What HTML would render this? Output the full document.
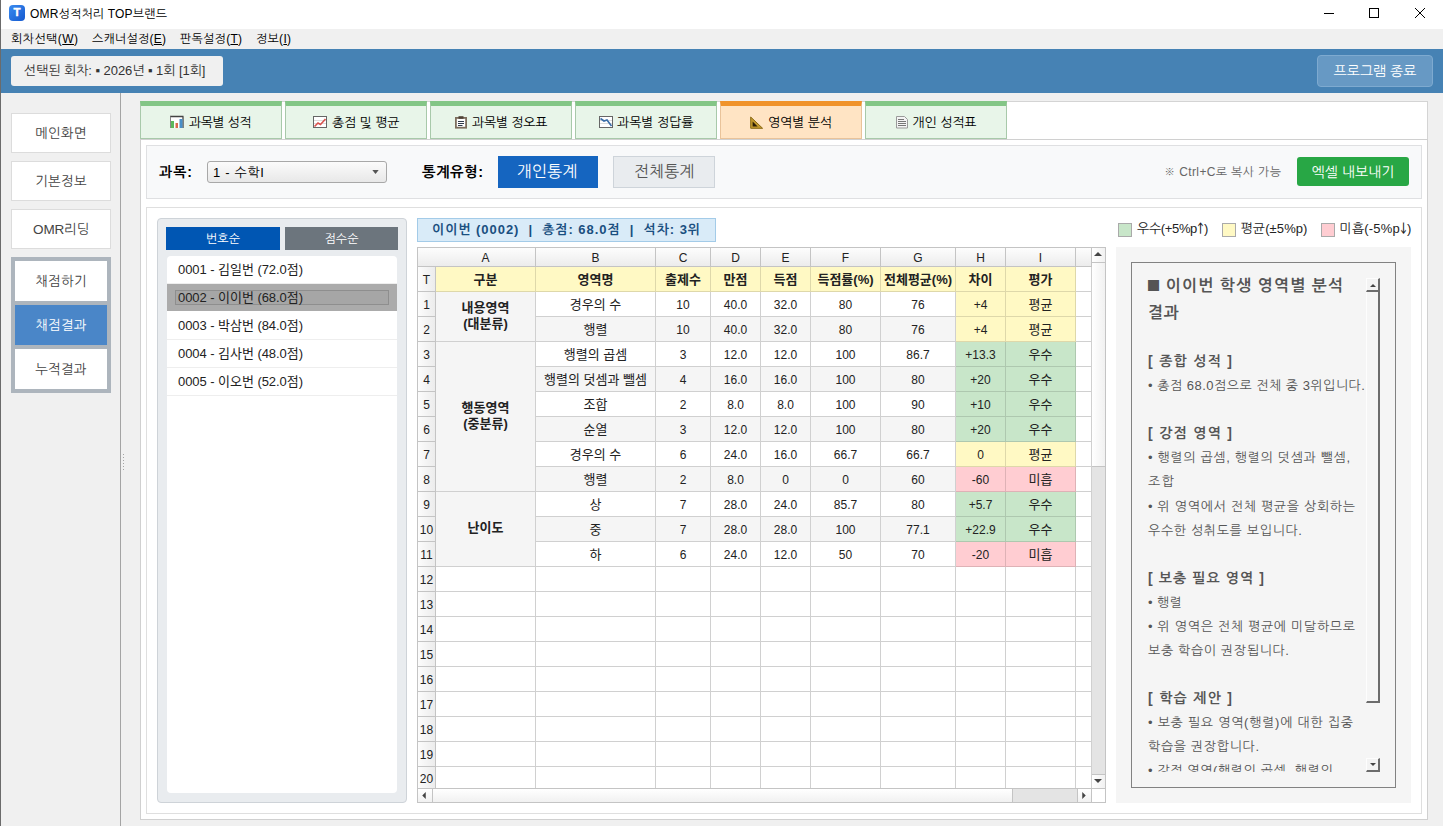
<!DOCTYPE html>
<html lang="ko"><head><meta charset="utf-8"><title>OMR성적처리 TOP브랜드</title>
<style>
html,body{margin:0;padding:0}
body{width:1443px;height:826px;position:relative;overflow:hidden;background:#f0f0f0;font-family:"Liberation Sans","NanumGothic",sans-serif;font-size:12px;color:#000}
.b{position:absolute;box-sizing:border-box}
.t{position:absolute;white-space:nowrap;box-sizing:border-box}
.ui{font-family:"Liberation Sans","NanumGothic",sans-serif}
.mg{font-family:"Liberation Sans","Noto Sans CJK KR",sans-serif}
.c{position:absolute;box-sizing:border-box;border-right:1px solid #d0d0d0;border-bottom:1px solid #d0d0d0;text-align:center;font-family:"Liberation Sans","Noto Sans CJK KR",sans-serif;font-size:12px;color:#222;white-space:nowrap;overflow:hidden}
.hd{background:linear-gradient(#fdfdfd,#ececec);border-color:#c4c4c4;color:#222}
.rh{background:linear-gradient(90deg,#fcfcfc,#ececec);border-color:#c4c4c4}
.y,.g,.p{border-color:rgba(0,0,0,.13)}
.y{background:#fff9c4}.g{background:#c8e6c9}.p{background:#ffcdd2}.z{background:#f5f5f5}
.bd{font-weight:700}
.ar{font-family:IPAGothic,sans-serif;line-height:1;margin:0 -3px;letter-spacing:0}
.c{padding-top:1px}
.h{font-size:13px;padding-top:0}
u{text-decoration:underline}
</style></head><body>

<div class="b " style="left:0px;top:0px;width:1443px;height:29px;background:#fff"></div>
<div class="b " style="left:9px;top:5px;width:16px;height:16px;border-radius:4px;background:linear-gradient(135deg,#3a8bf0,#1559cf)"></div>
<div class="t ui" style="left:9px;top:4.2px;font-size:11.5px;line-height:17.5px;color:#fff;font-weight:700;width:16px;text-align:center;-webkit-text-stroke:.4px #fff;"><span>T</span></div>
<div class="t ui" style="left:30px;top:5.0px;font-size:12px;line-height:18px;color:#000;letter-spacing:0.17px;"><span>OMR성적처리 TOP브랜드</span></div>
<svg class="b" style="left:1310px;top:0" width="133" height="29" viewBox="0 0 133 29"><g stroke="#000" stroke-width="1" fill="none"><path d="M14 13.5h10"/><rect x="59.5" y="8.5" width="9" height="9"/><path d="M105 8l10 10M115 8l-10 10"/></g></svg>
<div class="b " style="left:0px;top:29px;width:1443px;height:20px;background:#f0f0f0"></div>
<div class="t ui" style="left:11px;top:29.5px;font-size:12px;line-height:18px;color:#000;letter-spacing:0.42px;"><span>회차선택(<u>W</u>)</span></div>
<div class="t ui" style="left:92px;top:29.5px;font-size:12px;line-height:18px;color:#000;letter-spacing:0.23px;"><span>스캐너설정(<u>E</u>)</span></div>
<div class="t ui" style="left:180px;top:29.5px;font-size:12px;line-height:18px;color:#000;letter-spacing:0.26px;"><span>판독설정(<u>T</u>)</span></div>
<div class="t ui" style="left:256px;top:29.5px;font-size:12px;line-height:18px;color:#000;letter-spacing:0.27px;"><span>정보(<u>I</u>)</span></div>
<div class="b " style="left:0px;top:49px;width:1443px;height:44px;background:#4682b4"></div>
<div class="b " style="left:11px;top:56px;width:212px;height:30px;background:#f0f0f0;border-radius:3px"></div>
<div class="t ui" style="left:24px;top:60.8px;font-size:13px;line-height:19px;color:#333;letter-spacing:-0.06px;"><span>선택된 회차: ▪ 2026년 ▪ 1회 [1회]</span></div>
<div class="b " style="left:1317px;top:55px;width:116px;height:32px;background:#6799c4;border:1px solid #7eaad0;border-radius:4px"></div>
<div class="t ui" style="left:1317px;top:61.0px;font-size:14px;line-height:20px;color:#fff;width:116px;text-align:center;"><span>프로그램 종료</span></div>
<div class="b " style="left:11px;top:113px;width:100px;height:40px;background:#fff;border:1px solid #dcdcdc"></div>
<div class="t ui" style="left:11px;top:124.2px;font-size:13.5px;line-height:19.5px;color:#444;width:100px;text-align:center;letter-spacing:0.24px;"><span>메인화면</span></div>
<div class="b " style="left:11px;top:161px;width:100px;height:40px;background:#fff;border:1px solid #dcdcdc"></div>
<div class="t ui" style="left:11px;top:172.2px;font-size:13.5px;line-height:19.5px;color:#444;width:100px;text-align:center;letter-spacing:0.24px;"><span>기본정보</span></div>
<div class="b " style="left:11px;top:209px;width:100px;height:40px;background:#fff;border:1px solid #dcdcdc"></div>
<div class="t ui" style="left:11px;top:220.2px;font-size:13.5px;line-height:19.5px;color:#444;width:100px;text-align:center;letter-spacing:-0.22px;"><span>OMR리딩</span></div>
<div class="b " style="left:11px;top:257px;width:100px;height:136px;background:#adb5bd"></div>
<div class="b " style="left:15px;top:261px;width:92px;height:40px;background:#fff"></div>
<div class="t ui" style="left:15px;top:272.2px;font-size:13.5px;line-height:19.5px;color:#444;width:92px;text-align:center;letter-spacing:0.24px;"><span>채점하기</span></div>
<div class="b " style="left:15px;top:305px;width:92px;height:40px;background:#4a86c8"></div>
<div class="t ui" style="left:15px;top:316.2px;font-size:13.5px;line-height:19.5px;color:#fff;width:92px;text-align:center;letter-spacing:0.24px;"><span>채점결과</span></div>
<div class="b " style="left:15px;top:349px;width:92px;height:40px;background:#fff"></div>
<div class="t ui" style="left:15px;top:360.2px;font-size:13.5px;line-height:19.5px;color:#444;width:92px;text-align:center;letter-spacing:0.24px;"><span>누적결과</span></div>
<div class="b " style="left:120px;top:93px;width:1px;height:733px;background:#a4a4a4"></div>
<div class="b " style="left:0px;top:0px;width:1px;height:826px;background:#6b6b6b"></div>
<div class="b " style="left:123px;top:454px;width:1px;height:16px;background:repeating-linear-gradient(#a4a4a4 0 1px,transparent 1px 3px)"></div>
<div class="b " style="left:140px;top:101px;width:1288px;height:39px;background:#fff;border:1px solid #d4d4d4;border-bottom:1px solid #c8c8c8"></div>
<div class="b " style="left:140px;top:139px;width:1288px;height:681px;background:#fff;border:1px solid #d0d0d0"></div>
<div class="b " style="left:140px;top:101px;width:142px;height:38px;background:#e8f5e9;border:1px solid #a8c9aa;border-top:5px solid #83c686"></div>
<div class="b " style="left:285px;top:101px;width:142px;height:38px;background:#e8f5e9;border:1px solid #a8c9aa;border-top:5px solid #83c686"></div>
<div class="b " style="left:430px;top:101px;width:142px;height:38px;background:#e8f5e9;border:1px solid #a8c9aa;border-top:5px solid #83c686"></div>
<div class="b " style="left:575px;top:101px;width:142px;height:38px;background:#e8f5e9;border:1px solid #a8c9aa;border-top:5px solid #83c686"></div>
<div class="b " style="left:720px;top:101px;width:142px;height:38px;background:#ffe4c4;border:1px solid #e9c39a;border-top:5px solid #f0932b"></div>
<div class="b " style="left:865px;top:101px;width:142px;height:38px;background:#e8f5e9;border:1px solid #a8c9aa;border-top:5px solid #83c686"></div>
<svg class="b" style="left:170px;top:115px" width="14" height="14" viewBox="0 0 14 14"><rect x="0.5" y="1.5" width="12.5" height="11.5" fill="#fff" stroke="#9a9a9a" stroke-width="0"/><path d="M0 1.5h13.5M13 1.5V13" stroke="#444" stroke-width="1.3" fill="none"/><path d="M0.5 1.5V13" stroke="#888" stroke-width="1" fill="none"/><rect x="1" y="6" width="3" height="7" fill="#5cb85c"/><rect x="5.5" y="8" width="2.5" height="5" fill="#d9694f"/><rect x="9.5" y="4" width="3" height="9" fill="#4a90c8"/></svg>
<div class="t ui" style="left:189px;top:113.0px;font-size:13px;line-height:19px;color:#000;letter-spacing:-0.44px;"><span>과목별 성적</span></div>
<svg class="b" style="left:313px;top:115px" width="14" height="14" viewBox="0 0 14 14"><rect x="0.5" y="1.5" width="13" height="11" fill="#fff" stroke="#666" stroke-width="1"/><path d="M1 5.5h12M1 8.5h12" stroke="#ddd" stroke-width="1"/><path d="M1.5 11.5L5 8l2.5 1.5L12.5 4" stroke="#d9534f" stroke-width="1.6" fill="none"/></svg>
<div class="t ui" style="left:332px;top:113.0px;font-size:13px;line-height:19px;color:#000;letter-spacing:-0.14px;"><span>총점 및 평균</span></div>
<svg class="b" style="left:455px;top:116px" width="13" height="13" viewBox="0 0 13 13"><rect x="0.9" y="1.9" width="10.2" height="9.8" fill="#fff" stroke="#7d6e5e" stroke-width="1.8"/><rect x="3.5" y="0.2" width="5" height="2.6" fill="#4f4236"/><path d="M3 5.5h6M3 7.5h6M3 9.5h4.5" stroke="#2f3a4a" stroke-width="1"/></svg>
<div class="t ui" style="left:472px;top:113.0px;font-size:13px;line-height:19px;color:#000;letter-spacing:-0.24px;"><span>과목별 정오표</span></div>
<svg class="b" style="left:599px;top:115px" width="14" height="14" viewBox="0 0 14 14"><rect x="0.5" y="1.5" width="13" height="11" fill="#fff" stroke="#666" stroke-width="1"/><path d="M1 5.5h12M1 8.5h12" stroke="#ddd" stroke-width="1"/><path d="M1.5 3.5L5 6l3-1 4.5 6" stroke="#3b6ea8" stroke-width="1.6" fill="none"/></svg>
<div class="t ui" style="left:617px;top:113.0px;font-size:13px;line-height:19px;color:#000;letter-spacing:-0.07px;"><span>과목별 정답률</span></div>
<svg class="b" style="left:750px;top:116px" width="14" height="13" viewBox="0 0 14 13"><path d="M0.7 1V12.3H12.6Z" fill="#c39a2e" stroke="#8a6914" stroke-width="1"/><path d="M2.6 5.6V10.4H7.6Z" fill="#2a1c05"/></svg>
<div class="t ui" style="left:768px;top:113.0px;font-size:13px;line-height:19px;color:#000;letter-spacing:-0.14px;"><span>영역별 분석</span></div>
<svg class="b" style="left:896px;top:116px" width="13" height="13" viewBox="0 0 13 13"><path d="M0.5 0.5h8l3 3v8.5h-11z" fill="#f4f4f4" stroke="#9a9a9a" stroke-width="1"/><path d="M2 3.5h6M2 5.5h8M2 7.5h8M2 9.5h8" stroke="#777" stroke-width="1"/></svg>
<div class="t ui" style="left:912.5px;top:113.0px;font-size:13px;line-height:19px;color:#000;letter-spacing:-0.14px;"><span>개인 성적표</span></div>
<div class="b " style="left:146px;top:145px;width:1276px;height:54px;background:#f8f9fa;border:1px solid #dfe0e2"></div>
<div class="t ui" style="left:159px;top:162.0px;font-size:14px;line-height:20px;color:#000;font-weight:700;letter-spacing:1.01px;"><span>과목:</span></div>
<div class="b " style="left:207px;top:161px;width:180px;height:22px;background:linear-gradient(#fbfbfb,#e8e8e8);border:1px solid #a8a8a8;border-radius:3px"></div>
<div class="t ui" style="left:213px;top:162.5px;font-size:13px;line-height:19px;color:#000;letter-spacing:0.69px;"><span>1 - 수학I</span></div>
<svg class="b" style="left:372px;top:170px" width="7" height="4" viewBox="0 0 8 5"><path d="M0 0h8L4 5z" fill="#555"/></svg>
<div class="t ui" style="left:422px;top:161.8px;font-size:14.5px;line-height:20.5px;color:#000;font-weight:700;letter-spacing:0.41px;"><span>통계유형:</span></div>
<div class="b " style="left:498px;top:156px;width:100px;height:32px;background:#1565c0"></div>
<div class="t ui" style="left:497px;top:161.0px;font-size:16px;line-height:22px;color:#fff;width:100px;text-align:center;"><span>개인통계</span></div>
<div class="b " style="left:613px;top:156px;width:102px;height:32px;background:#e9ecef;border:1px solid #ced4da"></div>
<div class="t ui" style="left:613px;top:161.0px;font-size:16px;line-height:22px;color:#555;width:102px;text-align:center;"><span>전체통계</span></div>
<div class="t ui" style="left:1164px;top:162.5px;font-size:12px;line-height:18px;color:#666;letter-spacing:0.35px;"><span><span style="font-family:NanumGothic,sans-serif">※</span> Ctrl+C로 복사 가능</span></div>
<div class="b " style="left:1297px;top:157px;width:112px;height:29px;background:#28a745;border-radius:3px"></div>
<div class="t ui" style="left:1297px;top:161.5px;font-size:14px;line-height:20px;color:#fff;width:112px;text-align:center;"><span>엑셀 내보내기</span></div>
<div class="b " style="left:146px;top:207px;width:1276px;height:607px;background:#fff;border:1px solid #dfdfdf"></div>
<div class="b " style="left:157px;top:218px;width:250px;height:585px;background:#e9ecef;border:1px solid #ced3d8;border-radius:4px"></div>
<div class="b " style="left:166px;top:227px;width:114px;height:23px;background:#0056b3"></div>
<div class="t ui" style="left:166px;top:229.5px;font-size:12px;line-height:18px;color:#fff;width:114px;text-align:center;"><span>번호순</span></div>
<div class="b " style="left:285px;top:227px;width:113px;height:23px;background:#6c757d"></div>
<div class="t ui" style="left:285px;top:229.5px;font-size:12px;line-height:18px;color:#fff;width:113px;text-align:center;"><span>점수순</span></div>
<div class="b " style="left:167px;top:256px;width:230px;height:537px;background:#fff;border-radius:4px"></div>
<div class="b " style="left:167px;top:283px;width:230px;height:1px;background:#eeeeee"></div>
<div class="t mg" style="left:178px;top:260.0px;font-size:13px;line-height:19px;color:#222;letter-spacing:-0.05px;"><span>0001 - 김일번 (72.0점)</span></div>
<div class="b " style="left:167px;top:284px;width:230px;height:27px;background:#ababab"></div>
<div class="b " style="left:175px;top:290px;width:214px;height:15px;background:#a6a6a6;border:1px solid #8e8e8e"></div>
<div class="t mg" style="left:178px;top:288.0px;font-size:13px;line-height:19px;color:#222;letter-spacing:-0.05px;"><span>0002 - 이이번 (68.0점)</span></div>
<div class="b " style="left:167px;top:339px;width:230px;height:1px;background:#eeeeee"></div>
<div class="t mg" style="left:178px;top:316.0px;font-size:13px;line-height:19px;color:#222;letter-spacing:-0.05px;"><span>0003 - 박삼번 (84.0점)</span></div>
<div class="b " style="left:167px;top:367px;width:230px;height:1px;background:#eeeeee"></div>
<div class="t mg" style="left:178px;top:344.0px;font-size:13px;line-height:19px;color:#222;letter-spacing:-0.05px;"><span>0004 - 김사번 (48.0점)</span></div>
<div class="b " style="left:167px;top:395px;width:230px;height:1px;background:#eeeeee"></div>
<div class="t mg" style="left:178px;top:372.0px;font-size:13px;line-height:19px;color:#222;letter-spacing:-0.05px;"><span>0005 - 이오번 (52.0점)</span></div>
<div class="b " style="left:417px;top:218px;width:299px;height:24px;background:#d9ebf8;border:1px solid #a3cbe8"></div>
<div class="t ui" style="left:432px;top:219.7px;font-size:13px;line-height:19px;color:#1a4f80;font-weight:700;letter-spacing:0.95px;"><span>이이번 (0002)&nbsp; |&nbsp; 총점: 68.0점&nbsp; |&nbsp; 석차: 3위</span></div>
<div class="b " style="left:417px;top:247px;width:689px;height:556px;background:#fff;border:1px solid #c4c4c4"></div>
<div class="c hd" style="left:418px;top:248px;width:118px;height:19px;line-height:19px;padding-left:18px">A</div>
<div class="c hd" style="left:536px;top:248px;width:120px;height:19px;line-height:19px;">B</div>
<div class="c hd" style="left:656px;top:248px;width:55px;height:19px;line-height:19px;">C</div>
<div class="c hd" style="left:711px;top:248px;width:50px;height:19px;line-height:19px;">D</div>
<div class="c hd" style="left:761px;top:248px;width:50px;height:19px;line-height:19px;">E</div>
<div class="c hd" style="left:811px;top:248px;width:70px;height:19px;line-height:19px;">F</div>
<div class="c hd" style="left:881px;top:248px;width:75px;height:19px;line-height:19px;">G</div>
<div class="c hd" style="left:956px;top:248px;width:50px;height:19px;line-height:19px;">H</div>
<div class="c hd" style="left:1006px;top:248px;width:70px;height:19px;line-height:19px;">I</div>
<div class="c hd" style="left:1076px;top:248px;width:16px;height:19px;line-height:19px;"></div>
<div class="c rh" style="left:418px;top:267px;width:18px;height:25px;line-height:25px;">T</div>
<div class="c y bd h" style="left:436px;top:267px;width:100px;height:25px;line-height:25px;">구분</div>
<div class="c y bd h" style="left:536px;top:267px;width:120px;height:25px;line-height:25px;">영역명</div>
<div class="c y bd h" style="left:656px;top:267px;width:55px;height:25px;line-height:25px;">출제수</div>
<div class="c y bd h" style="left:711px;top:267px;width:50px;height:25px;line-height:25px;">만점</div>
<div class="c y bd h" style="left:761px;top:267px;width:50px;height:25px;line-height:25px;">득점</div>
<div class="c y bd h" style="left:811px;top:267px;width:70px;height:25px;line-height:25px;">득점률(%)</div>
<div class="c y bd h" style="left:881px;top:267px;width:75px;height:25px;line-height:25px;">전체평균(%)</div>
<div class="c y bd h" style="left:956px;top:267px;width:50px;height:25px;line-height:25px;">차이</div>
<div class="c y bd h" style="left:1006px;top:267px;width:70px;height:25px;line-height:25px;">평가</div>
<div class="c " style="left:1076px;top:267px;width:16px;height:25px;line-height:25px;"></div>
<div class="c rh" style="left:418px;top:292px;width:18px;height:25px;line-height:25px;">1</div>
<div class="c  h" style="left:536px;top:292px;width:120px;height:25px;line-height:25px;">경우의 수</div>
<div class="c " style="left:656px;top:292px;width:55px;height:25px;line-height:25px;">10</div>
<div class="c " style="left:711px;top:292px;width:50px;height:25px;line-height:25px;">40.0</div>
<div class="c " style="left:761px;top:292px;width:50px;height:25px;line-height:25px;">32.0</div>
<div class="c " style="left:811px;top:292px;width:70px;height:25px;line-height:25px;">80</div>
<div class="c " style="left:881px;top:292px;width:75px;height:25px;line-height:25px;">76</div>
<div class="c y" style="left:956px;top:292px;width:50px;height:25px;line-height:25px;">+4</div>
<div class="c y h" style="left:1006px;top:292px;width:70px;height:25px;line-height:25px;">평균</div>
<div class="c " style="left:1076px;top:292px;width:16px;height:25px;line-height:25px;"></div>
<div class="c rh" style="left:418px;top:317px;width:18px;height:25px;line-height:25px;">2</div>
<div class="c z h" style="left:536px;top:317px;width:120px;height:25px;line-height:25px;">행렬</div>
<div class="c z" style="left:656px;top:317px;width:55px;height:25px;line-height:25px;">10</div>
<div class="c z" style="left:711px;top:317px;width:50px;height:25px;line-height:25px;">40.0</div>
<div class="c z" style="left:761px;top:317px;width:50px;height:25px;line-height:25px;">32.0</div>
<div class="c z" style="left:811px;top:317px;width:70px;height:25px;line-height:25px;">80</div>
<div class="c z" style="left:881px;top:317px;width:75px;height:25px;line-height:25px;">76</div>
<div class="c y" style="left:956px;top:317px;width:50px;height:25px;line-height:25px;">+4</div>
<div class="c y h" style="left:1006px;top:317px;width:70px;height:25px;line-height:25px;">평균</div>
<div class="c " style="left:1076px;top:317px;width:16px;height:25px;line-height:25px;"></div>
<div class="c rh" style="left:418px;top:342px;width:18px;height:25px;line-height:25px;">3</div>
<div class="c  h" style="left:536px;top:342px;width:120px;height:25px;line-height:25px;">행렬의 곱셈</div>
<div class="c " style="left:656px;top:342px;width:55px;height:25px;line-height:25px;">3</div>
<div class="c " style="left:711px;top:342px;width:50px;height:25px;line-height:25px;">12.0</div>
<div class="c " style="left:761px;top:342px;width:50px;height:25px;line-height:25px;">12.0</div>
<div class="c " style="left:811px;top:342px;width:70px;height:25px;line-height:25px;">100</div>
<div class="c " style="left:881px;top:342px;width:75px;height:25px;line-height:25px;">86.7</div>
<div class="c g" style="left:956px;top:342px;width:50px;height:25px;line-height:25px;">+13.3</div>
<div class="c g h" style="left:1006px;top:342px;width:70px;height:25px;line-height:25px;">우수</div>
<div class="c " style="left:1076px;top:342px;width:16px;height:25px;line-height:25px;"></div>
<div class="c rh" style="left:418px;top:367px;width:18px;height:25px;line-height:25px;">4</div>
<div class="c z h" style="left:536px;top:367px;width:120px;height:25px;line-height:25px;">행렬의 덧셈과 뺄셈</div>
<div class="c z" style="left:656px;top:367px;width:55px;height:25px;line-height:25px;">4</div>
<div class="c z" style="left:711px;top:367px;width:50px;height:25px;line-height:25px;">16.0</div>
<div class="c z" style="left:761px;top:367px;width:50px;height:25px;line-height:25px;">16.0</div>
<div class="c z" style="left:811px;top:367px;width:70px;height:25px;line-height:25px;">100</div>
<div class="c z" style="left:881px;top:367px;width:75px;height:25px;line-height:25px;">80</div>
<div class="c g" style="left:956px;top:367px;width:50px;height:25px;line-height:25px;">+20</div>
<div class="c g h" style="left:1006px;top:367px;width:70px;height:25px;line-height:25px;">우수</div>
<div class="c " style="left:1076px;top:367px;width:16px;height:25px;line-height:25px;"></div>
<div class="c rh" style="left:418px;top:392px;width:18px;height:25px;line-height:25px;">5</div>
<div class="c  h" style="left:536px;top:392px;width:120px;height:25px;line-height:25px;">조합</div>
<div class="c " style="left:656px;top:392px;width:55px;height:25px;line-height:25px;">2</div>
<div class="c " style="left:711px;top:392px;width:50px;height:25px;line-height:25px;">8.0</div>
<div class="c " style="left:761px;top:392px;width:50px;height:25px;line-height:25px;">8.0</div>
<div class="c " style="left:811px;top:392px;width:70px;height:25px;line-height:25px;">100</div>
<div class="c " style="left:881px;top:392px;width:75px;height:25px;line-height:25px;">90</div>
<div class="c g" style="left:956px;top:392px;width:50px;height:25px;line-height:25px;">+10</div>
<div class="c g h" style="left:1006px;top:392px;width:70px;height:25px;line-height:25px;">우수</div>
<div class="c " style="left:1076px;top:392px;width:16px;height:25px;line-height:25px;"></div>
<div class="c rh" style="left:418px;top:417px;width:18px;height:25px;line-height:25px;">6</div>
<div class="c z h" style="left:536px;top:417px;width:120px;height:25px;line-height:25px;">순열</div>
<div class="c z" style="left:656px;top:417px;width:55px;height:25px;line-height:25px;">3</div>
<div class="c z" style="left:711px;top:417px;width:50px;height:25px;line-height:25px;">12.0</div>
<div class="c z" style="left:761px;top:417px;width:50px;height:25px;line-height:25px;">12.0</div>
<div class="c z" style="left:811px;top:417px;width:70px;height:25px;line-height:25px;">100</div>
<div class="c z" style="left:881px;top:417px;width:75px;height:25px;line-height:25px;">80</div>
<div class="c g" style="left:956px;top:417px;width:50px;height:25px;line-height:25px;">+20</div>
<div class="c g h" style="left:1006px;top:417px;width:70px;height:25px;line-height:25px;">우수</div>
<div class="c " style="left:1076px;top:417px;width:16px;height:25px;line-height:25px;"></div>
<div class="c rh" style="left:418px;top:442px;width:18px;height:25px;line-height:25px;">7</div>
<div class="c  h" style="left:536px;top:442px;width:120px;height:25px;line-height:25px;">경우의 수</div>
<div class="c " style="left:656px;top:442px;width:55px;height:25px;line-height:25px;">6</div>
<div class="c " style="left:711px;top:442px;width:50px;height:25px;line-height:25px;">24.0</div>
<div class="c " style="left:761px;top:442px;width:50px;height:25px;line-height:25px;">16.0</div>
<div class="c " style="left:811px;top:442px;width:70px;height:25px;line-height:25px;">66.7</div>
<div class="c " style="left:881px;top:442px;width:75px;height:25px;line-height:25px;">66.7</div>
<div class="c y" style="left:956px;top:442px;width:50px;height:25px;line-height:25px;">0</div>
<div class="c y h" style="left:1006px;top:442px;width:70px;height:25px;line-height:25px;">평균</div>
<div class="c " style="left:1076px;top:442px;width:16px;height:25px;line-height:25px;"></div>
<div class="c rh" style="left:418px;top:467px;width:18px;height:25px;line-height:25px;">8</div>
<div class="c z h" style="left:536px;top:467px;width:120px;height:25px;line-height:25px;">행렬</div>
<div class="c z" style="left:656px;top:467px;width:55px;height:25px;line-height:25px;">2</div>
<div class="c z" style="left:711px;top:467px;width:50px;height:25px;line-height:25px;">8.0</div>
<div class="c z" style="left:761px;top:467px;width:50px;height:25px;line-height:25px;">0</div>
<div class="c z" style="left:811px;top:467px;width:70px;height:25px;line-height:25px;">0</div>
<div class="c z" style="left:881px;top:467px;width:75px;height:25px;line-height:25px;">60</div>
<div class="c p" style="left:956px;top:467px;width:50px;height:25px;line-height:25px;">-60</div>
<div class="c p h" style="left:1006px;top:467px;width:70px;height:25px;line-height:25px;">미흡</div>
<div class="c " style="left:1076px;top:467px;width:16px;height:25px;line-height:25px;"></div>
<div class="c rh" style="left:418px;top:492px;width:18px;height:25px;line-height:25px;">9</div>
<div class="c  h" style="left:536px;top:492px;width:120px;height:25px;line-height:25px;">상</div>
<div class="c " style="left:656px;top:492px;width:55px;height:25px;line-height:25px;">7</div>
<div class="c " style="left:711px;top:492px;width:50px;height:25px;line-height:25px;">28.0</div>
<div class="c " style="left:761px;top:492px;width:50px;height:25px;line-height:25px;">24.0</div>
<div class="c " style="left:811px;top:492px;width:70px;height:25px;line-height:25px;">85.7</div>
<div class="c " style="left:881px;top:492px;width:75px;height:25px;line-height:25px;">80</div>
<div class="c g" style="left:956px;top:492px;width:50px;height:25px;line-height:25px;">+5.7</div>
<div class="c g h" style="left:1006px;top:492px;width:70px;height:25px;line-height:25px;">우수</div>
<div class="c " style="left:1076px;top:492px;width:16px;height:25px;line-height:25px;"></div>
<div class="c rh" style="left:418px;top:517px;width:18px;height:25px;line-height:25px;">10</div>
<div class="c z h" style="left:536px;top:517px;width:120px;height:25px;line-height:25px;">중</div>
<div class="c z" style="left:656px;top:517px;width:55px;height:25px;line-height:25px;">7</div>
<div class="c z" style="left:711px;top:517px;width:50px;height:25px;line-height:25px;">28.0</div>
<div class="c z" style="left:761px;top:517px;width:50px;height:25px;line-height:25px;">28.0</div>
<div class="c z" style="left:811px;top:517px;width:70px;height:25px;line-height:25px;">100</div>
<div class="c z" style="left:881px;top:517px;width:75px;height:25px;line-height:25px;">77.1</div>
<div class="c g" style="left:956px;top:517px;width:50px;height:25px;line-height:25px;">+22.9</div>
<div class="c g h" style="left:1006px;top:517px;width:70px;height:25px;line-height:25px;">우수</div>
<div class="c " style="left:1076px;top:517px;width:16px;height:25px;line-height:25px;"></div>
<div class="c rh" style="left:418px;top:542px;width:18px;height:25px;line-height:25px;">11</div>
<div class="c  h" style="left:536px;top:542px;width:120px;height:25px;line-height:25px;">하</div>
<div class="c " style="left:656px;top:542px;width:55px;height:25px;line-height:25px;">6</div>
<div class="c " style="left:711px;top:542px;width:50px;height:25px;line-height:25px;">24.0</div>
<div class="c " style="left:761px;top:542px;width:50px;height:25px;line-height:25px;">12.0</div>
<div class="c " style="left:811px;top:542px;width:70px;height:25px;line-height:25px;">50</div>
<div class="c " style="left:881px;top:542px;width:75px;height:25px;line-height:25px;">70</div>
<div class="c p" style="left:956px;top:542px;width:50px;height:25px;line-height:25px;">-20</div>
<div class="c p h" style="left:1006px;top:542px;width:70px;height:25px;line-height:25px;">미흡</div>
<div class="c " style="left:1076px;top:542px;width:16px;height:25px;line-height:25px;"></div>
<div class="c rh" style="left:418px;top:567px;width:18px;height:25px;line-height:25px;">12</div>
<div class="c " style="left:436px;top:567px;width:100px;height:25px;line-height:25px;"></div>
<div class="c " style="left:536px;top:567px;width:120px;height:25px;line-height:25px;"></div>
<div class="c " style="left:656px;top:567px;width:55px;height:25px;line-height:25px;"></div>
<div class="c " style="left:711px;top:567px;width:50px;height:25px;line-height:25px;"></div>
<div class="c " style="left:761px;top:567px;width:50px;height:25px;line-height:25px;"></div>
<div class="c " style="left:811px;top:567px;width:70px;height:25px;line-height:25px;"></div>
<div class="c " style="left:881px;top:567px;width:75px;height:25px;line-height:25px;"></div>
<div class="c " style="left:956px;top:567px;width:50px;height:25px;line-height:25px;"></div>
<div class="c " style="left:1006px;top:567px;width:70px;height:25px;line-height:25px;"></div>
<div class="c " style="left:1076px;top:567px;width:16px;height:25px;line-height:25px;"></div>
<div class="c rh" style="left:418px;top:592px;width:18px;height:25px;line-height:25px;">13</div>
<div class="c " style="left:436px;top:592px;width:100px;height:25px;line-height:25px;"></div>
<div class="c " style="left:536px;top:592px;width:120px;height:25px;line-height:25px;"></div>
<div class="c " style="left:656px;top:592px;width:55px;height:25px;line-height:25px;"></div>
<div class="c " style="left:711px;top:592px;width:50px;height:25px;line-height:25px;"></div>
<div class="c " style="left:761px;top:592px;width:50px;height:25px;line-height:25px;"></div>
<div class="c " style="left:811px;top:592px;width:70px;height:25px;line-height:25px;"></div>
<div class="c " style="left:881px;top:592px;width:75px;height:25px;line-height:25px;"></div>
<div class="c " style="left:956px;top:592px;width:50px;height:25px;line-height:25px;"></div>
<div class="c " style="left:1006px;top:592px;width:70px;height:25px;line-height:25px;"></div>
<div class="c " style="left:1076px;top:592px;width:16px;height:25px;line-height:25px;"></div>
<div class="c rh" style="left:418px;top:617px;width:18px;height:25px;line-height:25px;">14</div>
<div class="c " style="left:436px;top:617px;width:100px;height:25px;line-height:25px;"></div>
<div class="c " style="left:536px;top:617px;width:120px;height:25px;line-height:25px;"></div>
<div class="c " style="left:656px;top:617px;width:55px;height:25px;line-height:25px;"></div>
<div class="c " style="left:711px;top:617px;width:50px;height:25px;line-height:25px;"></div>
<div class="c " style="left:761px;top:617px;width:50px;height:25px;line-height:25px;"></div>
<div class="c " style="left:811px;top:617px;width:70px;height:25px;line-height:25px;"></div>
<div class="c " style="left:881px;top:617px;width:75px;height:25px;line-height:25px;"></div>
<div class="c " style="left:956px;top:617px;width:50px;height:25px;line-height:25px;"></div>
<div class="c " style="left:1006px;top:617px;width:70px;height:25px;line-height:25px;"></div>
<div class="c " style="left:1076px;top:617px;width:16px;height:25px;line-height:25px;"></div>
<div class="c rh" style="left:418px;top:642px;width:18px;height:25px;line-height:25px;">15</div>
<div class="c " style="left:436px;top:642px;width:100px;height:25px;line-height:25px;"></div>
<div class="c " style="left:536px;top:642px;width:120px;height:25px;line-height:25px;"></div>
<div class="c " style="left:656px;top:642px;width:55px;height:25px;line-height:25px;"></div>
<div class="c " style="left:711px;top:642px;width:50px;height:25px;line-height:25px;"></div>
<div class="c " style="left:761px;top:642px;width:50px;height:25px;line-height:25px;"></div>
<div class="c " style="left:811px;top:642px;width:70px;height:25px;line-height:25px;"></div>
<div class="c " style="left:881px;top:642px;width:75px;height:25px;line-height:25px;"></div>
<div class="c " style="left:956px;top:642px;width:50px;height:25px;line-height:25px;"></div>
<div class="c " style="left:1006px;top:642px;width:70px;height:25px;line-height:25px;"></div>
<div class="c " style="left:1076px;top:642px;width:16px;height:25px;line-height:25px;"></div>
<div class="c rh" style="left:418px;top:667px;width:18px;height:25px;line-height:25px;">16</div>
<div class="c " style="left:436px;top:667px;width:100px;height:25px;line-height:25px;"></div>
<div class="c " style="left:536px;top:667px;width:120px;height:25px;line-height:25px;"></div>
<div class="c " style="left:656px;top:667px;width:55px;height:25px;line-height:25px;"></div>
<div class="c " style="left:711px;top:667px;width:50px;height:25px;line-height:25px;"></div>
<div class="c " style="left:761px;top:667px;width:50px;height:25px;line-height:25px;"></div>
<div class="c " style="left:811px;top:667px;width:70px;height:25px;line-height:25px;"></div>
<div class="c " style="left:881px;top:667px;width:75px;height:25px;line-height:25px;"></div>
<div class="c " style="left:956px;top:667px;width:50px;height:25px;line-height:25px;"></div>
<div class="c " style="left:1006px;top:667px;width:70px;height:25px;line-height:25px;"></div>
<div class="c " style="left:1076px;top:667px;width:16px;height:25px;line-height:25px;"></div>
<div class="c rh" style="left:418px;top:692px;width:18px;height:25px;line-height:25px;">17</div>
<div class="c " style="left:436px;top:692px;width:100px;height:25px;line-height:25px;"></div>
<div class="c " style="left:536px;top:692px;width:120px;height:25px;line-height:25px;"></div>
<div class="c " style="left:656px;top:692px;width:55px;height:25px;line-height:25px;"></div>
<div class="c " style="left:711px;top:692px;width:50px;height:25px;line-height:25px;"></div>
<div class="c " style="left:761px;top:692px;width:50px;height:25px;line-height:25px;"></div>
<div class="c " style="left:811px;top:692px;width:70px;height:25px;line-height:25px;"></div>
<div class="c " style="left:881px;top:692px;width:75px;height:25px;line-height:25px;"></div>
<div class="c " style="left:956px;top:692px;width:50px;height:25px;line-height:25px;"></div>
<div class="c " style="left:1006px;top:692px;width:70px;height:25px;line-height:25px;"></div>
<div class="c " style="left:1076px;top:692px;width:16px;height:25px;line-height:25px;"></div>
<div class="c rh" style="left:418px;top:717px;width:18px;height:25px;line-height:25px;">18</div>
<div class="c " style="left:436px;top:717px;width:100px;height:25px;line-height:25px;"></div>
<div class="c " style="left:536px;top:717px;width:120px;height:25px;line-height:25px;"></div>
<div class="c " style="left:656px;top:717px;width:55px;height:25px;line-height:25px;"></div>
<div class="c " style="left:711px;top:717px;width:50px;height:25px;line-height:25px;"></div>
<div class="c " style="left:761px;top:717px;width:50px;height:25px;line-height:25px;"></div>
<div class="c " style="left:811px;top:717px;width:70px;height:25px;line-height:25px;"></div>
<div class="c " style="left:881px;top:717px;width:75px;height:25px;line-height:25px;"></div>
<div class="c " style="left:956px;top:717px;width:50px;height:25px;line-height:25px;"></div>
<div class="c " style="left:1006px;top:717px;width:70px;height:25px;line-height:25px;"></div>
<div class="c " style="left:1076px;top:717px;width:16px;height:25px;line-height:25px;"></div>
<div class="c rh" style="left:418px;top:742px;width:18px;height:25px;line-height:25px;">19</div>
<div class="c " style="left:436px;top:742px;width:100px;height:25px;line-height:25px;"></div>
<div class="c " style="left:536px;top:742px;width:120px;height:25px;line-height:25px;"></div>
<div class="c " style="left:656px;top:742px;width:55px;height:25px;line-height:25px;"></div>
<div class="c " style="left:711px;top:742px;width:50px;height:25px;line-height:25px;"></div>
<div class="c " style="left:761px;top:742px;width:50px;height:25px;line-height:25px;"></div>
<div class="c " style="left:811px;top:742px;width:70px;height:25px;line-height:25px;"></div>
<div class="c " style="left:881px;top:742px;width:75px;height:25px;line-height:25px;"></div>
<div class="c " style="left:956px;top:742px;width:50px;height:25px;line-height:25px;"></div>
<div class="c " style="left:1006px;top:742px;width:70px;height:25px;line-height:25px;"></div>
<div class="c " style="left:1076px;top:742px;width:16px;height:25px;line-height:25px;"></div>
<div class="c rh" style="left:418px;top:767px;width:18px;height:22px;line-height:22px;">20</div>
<div class="c " style="left:436px;top:767px;width:100px;height:22px;line-height:22px;"></div>
<div class="c " style="left:536px;top:767px;width:120px;height:22px;line-height:22px;"></div>
<div class="c " style="left:656px;top:767px;width:55px;height:22px;line-height:22px;"></div>
<div class="c " style="left:711px;top:767px;width:50px;height:22px;line-height:22px;"></div>
<div class="c " style="left:761px;top:767px;width:50px;height:22px;line-height:22px;"></div>
<div class="c " style="left:811px;top:767px;width:70px;height:22px;line-height:22px;"></div>
<div class="c " style="left:881px;top:767px;width:75px;height:22px;line-height:22px;"></div>
<div class="c " style="left:956px;top:767px;width:50px;height:22px;line-height:22px;"></div>
<div class="c " style="left:1006px;top:767px;width:70px;height:22px;line-height:22px;"></div>
<div class="c " style="left:1076px;top:767px;width:16px;height:22px;line-height:22px;"></div>
<div class="c z bd h" style="left:436px;top:292px;width:100px;height:50px;display:flex;align-items:center;justify-content:center;line-height:16px;padding-bottom:2px">내용영역<br>(대분류)</div>
<div class="c z bd h" style="left:436px;top:342px;width:100px;height:150px;display:flex;align-items:center;justify-content:center;line-height:16px;padding-bottom:2px">행동영역<br>(중분류)</div>
<div class="c z bd h" style="left:436px;top:492px;width:100px;height:75px;display:flex;align-items:center;justify-content:center;line-height:16px;padding-bottom:2px">난이도</div>
<div class="b " style="left:1092px;top:248px;width:13px;height:540px;background:#e4e4e4"></div>
<div class="b " style="left:1092px;top:248px;width:13px;height:15px;background:linear-gradient(90deg,#fff,#f1f1f1);border-bottom:1px solid #c4c4c4"></div>
<div class="b " style="left:1092px;top:263px;width:13px;height:204px;background:linear-gradient(90deg,#fff,#f1f1f1);border-bottom:1px solid #c4c4c4"></div>
<div class="b " style="left:1092px;top:774px;width:13px;height:14px;background:linear-gradient(90deg,#fff,#f1f1f1);border-top:1px solid #c4c4c4"></div>
<svg class="b" style="left:1094px;top:252px" width="8" height="4" viewBox="0 0 8 4"><path d="M0 4h8L4 0z" fill="#444"/></svg>
<svg class="b" style="left:1094px;top:779px" width="8" height="4" viewBox="0 0 8 4"><path d="M0 0h8L4 4z" fill="#444"/></svg>
<div class="b " style="left:418px;top:788px;width:687px;height:14px;background:#e4e4e4;border-top:1px solid #c4c4c4"></div>
<div class="b " style="left:418px;top:788px;width:15px;height:14px;background:linear-gradient(#fff,#f1f1f1);border-top:1px solid #c4c4c4;border-right:1px solid #c4c4c4"></div>
<div class="b " style="left:433px;top:788px;width:580px;height:14px;background:linear-gradient(#fff,#f1f1f1);border-top:1px solid #c4c4c4;border-right:1px solid #c4c4c4"></div>
<div class="b " style="left:1077px;top:788px;width:15px;height:14px;background:linear-gradient(#fff,#f1f1f1);border-top:1px solid #c4c4c4;border-left:1px solid #c4c4c4;border-right:1px solid #c4c4c4"></div>
<div class="b " style="left:1092px;top:788px;width:13px;height:14px;background:#fff;border-top:1px solid #c4c4c4"></div>
<svg class="b" style="left:422px;top:792px" width="4" height="7" viewBox="0 0 4 8"><path d="M4 0v8L0 4z" fill="#444"/></svg>
<svg class="b" style="left:1082px;top:792px" width="4" height="7" viewBox="0 0 4 8"><path d="M0 0v8L4 4z" fill="#444"/></svg>
<div class="b " style="left:1118px;top:223px;width:14px;height:14px;background:#c8e6c9;border:1px solid #aaa"></div>
<div class="t ui" style="left:1137px;top:219.3px;font-size:13px;line-height:19px;color:#222;letter-spacing:-0.34px;"><span>우수(+5%p<span class=ar>↑</span>)</span></div>
<div class="b " style="left:1222px;top:223px;width:14px;height:14px;background:#fff9c4;border:1px solid #aaa"></div>
<div class="t ui" style="left:1240.5px;top:219.3px;font-size:13px;line-height:19px;color:#222;letter-spacing:0.10px;"><span>평균(±5%p)</span></div>
<div class="b " style="left:1321px;top:223px;width:14px;height:14px;background:#ffcdd2;border:1px solid #aaa"></div>
<div class="t ui" style="left:1339.5px;top:219.3px;font-size:13px;line-height:19px;color:#222;letter-spacing:0.19px;"><span>미흡(-5%p<span class=ar>↓</span>)</span></div>
<div class="b " style="left:1116px;top:247px;width:295px;height:556px;background:#f5f5f5"></div>
<div class="b " style="left:1131px;top:262px;width:265px;height:526px;background:#f5f5f5;border:1px solid #828282"></div>
<div class="t ui" style="left:1148px;top:275.0px;font-size:16px;line-height:22px;color:#555;font-weight:700;letter-spacing:1.13px;"><span><span style="font-family:NanumGothic,sans-serif;margin:0 -2px">■</span> 이이번 학생 영역별 분석</span></div>
<div class="t ui" style="left:1148px;top:302.0px;font-size:16px;line-height:22px;color:#555;font-weight:700;letter-spacing:0.91px;"><span>결과</span></div>
<div class="t ui" style="left:1148px;top:351.0px;font-size:14px;line-height:20px;color:#555;font-weight:700;letter-spacing:1.29px;"><span>[ 종합 성적 ]</span></div>
<div class="t ui" style="left:1148px;top:375.5px;font-size:13px;line-height:19px;color:#555;letter-spacing:0.50px;"><span>• 총점 68.0점으로 전체 중 3위입니다.</span></div>
<div class="t ui" style="left:1148px;top:423.0px;font-size:14px;line-height:20px;color:#555;font-weight:700;letter-spacing:1.29px;"><span>[ 강점 영역 ]</span></div>
<div class="t ui" style="left:1148px;top:447.5px;font-size:13px;line-height:19px;color:#555;letter-spacing:0.67px;"><span>• 행렬의 곱셈, 행렬의 덧셈과 뺄셈,</span></div>
<div class="t ui" style="left:1148px;top:471.5px;font-size:13px;line-height:19px;color:#555;letter-spacing:1.55px;"><span>조합</span></div>
<div class="t ui" style="left:1148px;top:496.5px;font-size:13px;line-height:19px;color:#555;letter-spacing:0.70px;"><span>• 위 영역에서 전체 평균을 상회하는</span></div>
<div class="t ui" style="left:1148px;top:520.5px;font-size:13px;line-height:19px;color:#555;letter-spacing:0.67px;"><span>우수한 성취도를 보입니다.</span></div>
<div class="t ui" style="left:1148px;top:568.0px;font-size:14px;line-height:20px;color:#555;font-weight:700;letter-spacing:1.10px;"><span>[ 보충 필요 영역 ]</span></div>
<div class="t ui" style="left:1148px;top:592.5px;font-size:13px;line-height:19px;color:#555;letter-spacing:0.46px;"><span>• 행렬</span></div>
<div class="t ui" style="left:1148px;top:616.5px;font-size:13px;line-height:19px;color:#555;letter-spacing:0.70px;"><span>• 위 영역은 전체 평균에 미달하므로</span></div>
<div class="t ui" style="left:1148px;top:640.5px;font-size:13px;line-height:19px;color:#555;letter-spacing:0.66px;"><span>보충 학습이 권장됩니다.</span></div>
<div class="t ui" style="left:1148px;top:688.0px;font-size:14px;line-height:20px;color:#555;font-weight:700;letter-spacing:1.29px;"><span>[ 학습 제안 ]</span></div>
<div class="t ui" style="left:1148px;top:712.5px;font-size:13px;line-height:19px;color:#555;letter-spacing:0.74px;"><span>• 보충 필요 영역(행렬)에 대한 집중</span></div>
<div class="t ui" style="left:1148px;top:736.5px;font-size:13px;line-height:19px;color:#555;letter-spacing:0.67px;"><span>학습을 권장합니다.</span></div>
<div class="b" style="left:1148px;top:761px;width:215px;height:11px;overflow:hidden"><div class="t ui" style="left:0;top:0;font-size:13px;line-height:19px;color:#555;letter-spacing:.62px">• 강점 영역(행렬의 곱셈, 행렬의</div></div>
<div class="b " style="left:1366px;top:278px;width:14px;height:494px;background:#f5f5f5"></div>
<div class="b " style="left:1366px;top:278px;width:14px;height:14px;background:#f3f3f3;border-style:solid;border-color:#fdfdfd #6c6c6c #6c6c6c #fdfdfd;border-width:1px 2px 2px 1px"></div>
<div class="b " style="left:1366px;top:292px;width:14px;height:411px;background:#f5f5f5;border-style:solid;border-color:#fdfdfd #6c6c6c #6c6c6c #fdfdfd;border-width:1px 2px 2px 1px;border-top-width:0"></div>
<div class="b " style="left:1366px;top:758px;width:14px;height:14px;background:#f3f3f3;border-style:solid;border-color:#fdfdfd #6c6c6c #6c6c6c #fdfdfd;border-width:1px 2px 2px 1px"></div>
<svg class="b" style="left:1370px;top:284px" width="6" height="3" viewBox="0 0 6 3"><path d="M0 3h6L3 0z" fill="#444"/></svg>
<svg class="b" style="left:1370px;top:763px" width="6" height="3" viewBox="0 0 6 3"><path d="M0 0h6L3 3z" fill="#444"/></svg>
</body></html>
